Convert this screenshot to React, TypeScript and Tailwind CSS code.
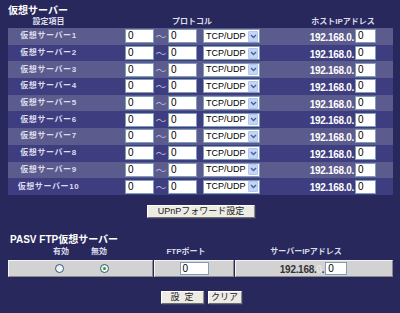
import React from 'react'

const font = { fontFamily: "'Liberation Sans','Noto Sans CJK JP',sans-serif" }

function Box({ w, className = '' }: { w: string; className?: string }) {
  return (
    <div className={`${w} h-[14px] bg-white border border-[#7f9db9] text-black text-[10px] leading-[12px] pl-[2px] font-normal ${className}`}>0</div>
  )
}

function Select() {
  return (
    <div className="ml-[6px] w-[57px] h-[14px] bg-white border border-[#7f9db9] flex items-center justify-between pl-[2px] pr-[1px]">
      <span className="text-[9px] text-black leading-none whitespace-nowrap">TCP/UDP</span>
      <span className="w-[10px] h-[11px] bg-[#c5d5fa] border border-[#b3c6ef] rounded-[1px] flex items-center justify-center">
        <svg width="7" height="5" viewBox="0 0 7 5"><path d="M1 1 L3.5 3.5 L6 1" stroke="#4d6185" strokeWidth="1.4" fill="none" /></svg>
      </span>
    </div>
  )
}

function Row({ n }: { n: number }) {
  const odd = n % 2 === 1
  return (
    <div className={`h-[16.7px] flex items-center ${odd ? 'bg-[#5c5b8d]' : 'bg-[#3e3d80]'}`}>
      <div className="w-[81px] text-center text-[8px] font-bold text-[#dcdcec] tracking-[0.6px] whitespace-nowrap">仮想サーバー{n}</div>
      <div className="w-[36px]" />
      <Box w="w-[29px]" />
      <div className="w-[14px] text-center text-[11px] text-[#b4b4d6] leading-none pt-[3px]">～</div>
      <Box w="w-[29px]" />
      <Select />
      <div className="flex-1 text-right text-[10px] font-bold text-white tracking-[-0.3px] pt-[2px]">192.168.0.</div>
      <Box w="w-[21px]" className="ml-[1px]" />
      <div className="w-[17px]" />
    </div>
  )
}

function Btn({ children, w }: { children: React.ReactNode; w: string }) {
  return (
    <div className={`${w} h-[13px] bg-[#ecebe4] border border-t-white border-l-white border-r-[#8a8a8a] border-b-[#6f6f6f] shadow-[1px_1px_0_#3a3a60] text-[9px] text-[#222] flex items-center justify-center leading-none whitespace-nowrap`}>
      {children}
    </div>
  )
}

const cell = 'h-[17px] bg-[#d2d2d2] border border-t-[#f4f4f4] border-l-[#f4f4f4] border-r-[#8a8a8a] border-b-[#8a8a8a]'

export default function App() {
  const rows = Array.from({ length: 10 }, (_, i) => i + 1)
  return (
    <div style={font} className="w-[400px] h-[313px] bg-[#28285c] overflow-hidden select-none">
      <div className="h-[5px]" />
      <div className="h-[11px] pl-[8px] text-[10px] font-bold text-white leading-[11px]">仮想サーバー</div>
      <div className="h-[12px] flex items-center text-[8px] font-bold text-[#dcdcec] whitespace-nowrap">
        <div className="w-[8px]" />
        <div className="w-[81px] text-center">設定項目</div>
        <div className="w-[206px] text-center">プロトコル</div>
        <div className="w-[96px] text-center">ホストIPアドレス</div>
      </div>
      <div className="mx-[8px] w-[385px]">
        {rows.map(n => <Row key={n} n={n} />)}
      </div>
      <div className="h-[10px]" />
      <div className="flex justify-center pl-[2px]">
        <Btn w="w-[108px]">UPnPフォワード設定</Btn>
      </div>
      <div className="h-[17px]" />
      <div className="h-[10px] pl-[10px] text-[10px] font-bold text-white leading-[10px] whitespace-nowrap">PASV FTP仮想サーバー</div>
      <div className="h-[14px] flex items-center text-[8px] font-bold text-[#dcdcec] whitespace-nowrap">
        <div className="w-[46px]" />
        <div className="w-[30px] text-center">有効</div>
        <div className="w-[8px]" />
        <div className="w-[30px] text-center">無効</div>
        <div className="w-[32px]" />
        <div className="w-[80px] text-center">FTPポート</div>
        <div className="w-[1px]" />
        <div className="w-[158px] text-center">サーバーIPアドレス</div>
      </div>
      <div className="h-[1px]" />
      <div className="mx-[8px] w-[385px] flex gap-[1px]">
        <div className={`${cell} w-[145px] flex items-center pl-[46px]`}>
          <span className="w-[9px] h-[9px] rounded-full border border-[#2c5a86] bg-gradient-to-br from-[#e4e4e0] to-white" />
          <span className="ml-[36px] w-[9px] h-[9px] rounded-full border border-[#2c5a86] bg-gradient-to-br from-[#e4e4e0] to-white flex items-center justify-center">
            <span className="w-[3px] h-[3px] rounded-full bg-[#22a522]" />
          </span>
        </div>
        <div className={`${cell} w-[80px] flex items-center justify-center`}>
          <div className="w-[29px] h-[13px] bg-white border border-[#7f9db9] text-black text-[10px] leading-[11px] pl-[2px]">0</div>
        </div>
        <div className={`${cell} flex-1 flex items-center justify-center pr-[1px]`}>
          <span className="text-[10px] font-bold text-[#333] tracking-[-0.3px] pt-[2px] whitespace-nowrap">192.168.<span className="text-[#e6e6e6]">0</span>.</span>
          <div className="ml-[1px] w-[22px] h-[13px] bg-white border border-[#7f9db9] text-black text-[10px] leading-[11px] pl-[2px]">0</div>
        </div>
      </div>
      <div className="h-[14px]" />
      <div className="flex justify-center gap-[4px] pl-[2px]">
        <Btn w="w-[43px]"><span className="tracking-[5px] pl-[5px]">設定</span></Btn>
        <Btn w="w-[34px]">クリア</Btn>
      </div>
    </div>
  )
}
